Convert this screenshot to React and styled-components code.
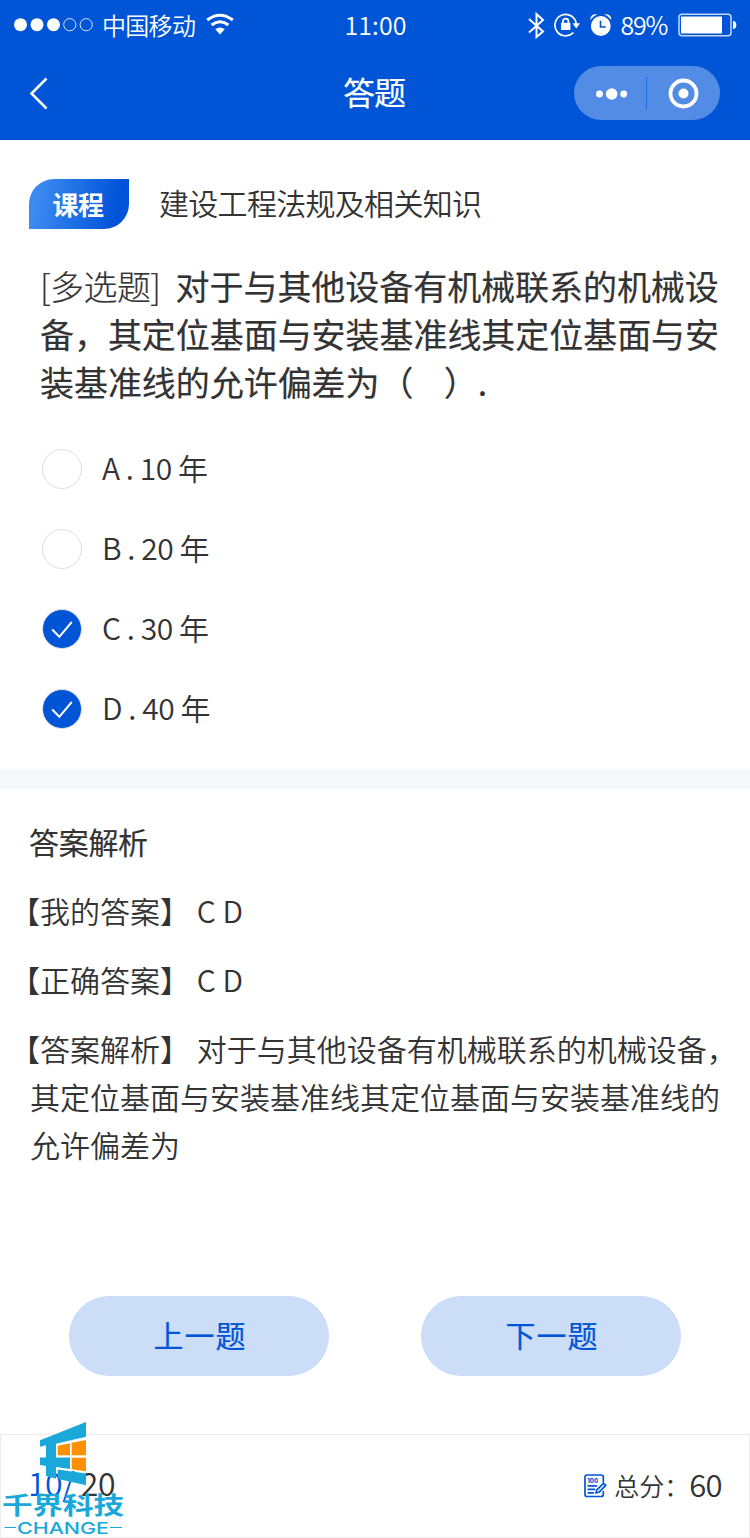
import styled, { createGlobalStyle, css } from 'styled-components';

const GlobalStyle = createGlobalStyle`
  * {
    box-sizing: border-box;
  }

  body {
    margin: 0;
    background: #fff;
    color: #333;
    font-family: 'Noto Sans CJK SC', sans-serif;
    text-spacing-trim: space-all;
  }
`;

// Sits between the regular and the medium cut
const semiMedium = css`
  font-weight: 400;
  -webkit-text-stroke: 0.2px currentColor;
`;

const Page = styled.main`
  display: flex;
  flex-direction: column;
  width: 750px;
  height: 1538px;
  overflow: hidden;
`;

const Header = styled.header`
  height: 140px;
  background: #0055d7;
  color: #fff;
`;

const StatusBar = styled.div`
  display: grid;
  grid-template-columns: 1fr auto 1fr;
  align-items: center;
  height: 50px;
  padding: 0 13px 0 14px;
  font-size: 25px;
  font-weight: 350;
  line-height: 46px;
`;

const StatusGroup = styled.div`
  display: flex;
  align-items: center;
  justify-content: ${props => (props.$end ? 'flex-end' : 'flex-start')};
  height: 50px;
`;

const Carrier = styled.span`
  margin: 0 11px 1px 8px;
  font-size: 24px;
  letter-spacing: -0.7px;
`;

const Time = styled.span`
  margin-bottom: 3px;
  letter-spacing: 0.1px;
`;

const Percent = styled.span`
  margin: 0 11px 3px 9px;
  letter-spacing: -1.3px;
`;

const Icon = styled.svg`
  display: block;
  flex: none;
  margin-left: ${props => props.$left || 0}px;
  margin-right: ${props => props.$right || 0}px;
`;

const NavBar = styled.div`
  display: grid;
  grid-template-columns: 1fr auto 1fr;
  align-items: center;
  height: 86px;
  padding: 0 30px 0 29px;
`;

const NavTitle = styled.h1`
  ${semiMedium}
  margin: 0 1px 4px 0;
  font-size: 32px;
  line-height: 48px;
  letter-spacing: -1px;
`;

const Capsule = styled.div`
  display: flex;
  align-items: center;
  justify-self: end;
  width: 146px;
  height: 54px;
  border-radius: 27px;
  background: #538ce4;
`;

const Section = styled.section`
  padding: ${props => props.$padding};
`;

const Course = styled.div`
  display: flex;
  align-items: center;
  gap: 30px;
  height: 50px;
`;

const Badge = styled.span`
  width: 100px;
  height: 50px;
  padding-right: 2px;
  border-radius: 25px 0 25px 0;
  background: linear-gradient(100deg, #3d8bf2 8%, #0052d7 88%);
  color: #fff;
  font-size: 26px;
  font-weight: 700;
  line-height: 49px;
  letter-spacing: -0.6px;
  text-align: center;
`;

const CourseName = styled.span`
  margin-bottom: 4px;
  font-size: 30px;
  font-weight: 350;
  line-height: 48px;
  letter-spacing: -0.7px;
`;

const Question = styled.h2`
  ${semiMedium}
  margin: 33px 0 23px 11px;
  font-size: 34px;
  line-height: 48px;
  letter-spacing: -0.05px;
  white-space: pre;
`;

const QuestionType = styled.span`
  font-weight: 300;
  letter-spacing: -0.6px;
`;

const OptionList = styled.ul`
  margin: 0;
  padding: 0 0 0 13px;
  list-style: none;
`;

const Option = styled.li`
  display: flex;
  align-items: center;
  gap: 20px;
  height: 80px;
  font-size: 30px;
  font-weight: 350;
  letter-spacing: -0.45px;
`;

const OptionLabel = styled.span`
  padding-bottom: 4px;
`;

const Radio = styled.span`
  display: flex;
  align-items: center;
  justify-content: center;
  width: 40px;
  height: 40px;
  border: 1px solid #dedede;
  border-radius: 50%;
  background: ${props => (props.$checked ? '#0055d7' : '#fff')};
`;

const Divider = styled.div`
  height: 20px;
  background: #f5f9fc;
`;

const AnalysisTitle = styled.h3`
  ${semiMedium}
  margin: 0 0 21px -1px;
  font-size: 30px;
  line-height: 48px;
  letter-spacing: -0.3px;
`;

const Analysis = styled.p`
  margin: 0 0 21px;
  font-size: 30px;
  font-weight: 350;
  line-height: 48px;
  text-indent: -20px;
  white-space: pre;
`;

const Actions = styled.div`
  display: flex;
  justify-content: space-between;
  margin-top: 107px;
  padding: 0 69px;
`;

const Button = styled.button`
  ${semiMedium}
  width: 260px;
  height: 80px;
  padding: 0 0 4px 2px;
  border: none;
  border-radius: 40px;
  background: #ccddf7;
  color: #0055d7;
  font-family: inherit;
  font-size: 30px;
  letter-spacing: 1px;
`;

const Footer = styled.footer`
  position: relative;
  display: flex;
  align-items: center;
  justify-content: space-between;
  height: 104px;
  margin-top: auto;
  padding: 0 27px;
  border: 1px solid #ededed;
`;

const Progress = styled.div`
  margin-bottom: 9px;
  font-size: 32px;
  font-weight: 350;
  line-height: 48px;
  letter-spacing: -0.5px;
`;

const Current = styled.span`
  color: #0055d7;
`;

const Score = styled.div`
  display: flex;
  align-items: center;
  font-size: 25px;
  font-weight: 350;
  line-height: 44px;
`;

const ScoreLabel = styled.span`
  margin-bottom: 2px;
`;

const ScoreValue = styled.span`
  margin-bottom: 4px;
  font-size: 31px;
  letter-spacing: -0.6px;
`;

// Brand mark floats over the footer's left corner
const Watermark = styled.svg`
  position: absolute;
  left: -1px;
  bottom: -1px;
`;

const options = [
  { label: 'A . 10 年', checked: false },
  { label: 'B . 20 年', checked: false },
  { label: 'C . 30 年', checked: true },
  { label: 'D . 40 年', checked: true },
];

function SignalIcon() {
  return (
    <Icon width="80" height="16" viewBox="0 0 80 16">
      <g fill="#fff">
        <circle cx="6.5" cy="7.7" r="6.5" />
        <circle cx="23" cy="7.7" r="6.5" />
        <circle cx="39.5" cy="7.7" r="6.5" />
      </g>
      <g fill="none" stroke="#fff" strokeWidth="1" opacity=".85">
        <circle cx="55.8" cy="7.7" r="6.1" />
        <circle cx="72.2" cy="7.7" r="6.1" />
      </g>
    </Icon>
  );
}

function WifiIcon() {
  return (
    <Icon width="28" height="24" viewBox="0 0 28 24">
      <g fill="none" stroke="#fff" strokeWidth="3">
        <path d="M1.2 7Q14-2.6 26.8 7" />
        <path d="M5.6 12Q14 5.4 22.4 12" />
      </g>
      <path d="M9.3 16.2Q14 12.6 18.7 16.2L14 21.6Z" fill="#fff" />
    </Icon>
  );
}

function BluetoothIcon() {
  return (
    <Icon width="17" height="27" viewBox="0 0 17 27">
      <path
        d="M1 7L15 19.5L8.5 25V2L15 8L1 20.5"
        fill="none"
        stroke="#fff"
        strokeWidth="2"
      />
    </Icon>
  );
}

function RotationLockIcon() {
  return (
    <Icon width="26" height="24" viewBox="0 0 26 24" $left={9}>
      <path
        d="M19.4 19.5A10.7 10.7 0 1 1 22.3 11"
        fill="none"
        stroke="#fff"
        strokeWidth="1.7"
      />
      <path d="M18.6 10.2H26L22.3 15.6Z" fill="#fff" />
      <rect x="7" y="9.8" width="9.4" height="7.2" fill="#fff" />
      <path
        d="M9 10.5V8.2Q9 5.7 11.7 5.7T14.4 8.2V10.5"
        fill="none"
        stroke="#fff"
        strokeWidth="1.7"
      />
    </Icon>
  );
}

function AlarmIcon() {
  return (
    <Icon width="22" height="24" viewBox="0 0 22 24" $left={10}>
      <circle cx="10.8" cy="13" r="9.9" fill="#fff" />
      <path
        d="M.2 7Q.5.2 7.5 1.3Q3 2.8.2 7ZM21.4 7Q21.1.2 14.1 1.3Q18.6 2.8 21.4 7Z"
        fill="#fff"
      />
      <path d="M10.5 7.8V14H15.8" fill="none" stroke="#0055d7" strokeWidth="1.6" />
    </Icon>
  );
}

function BatteryIcon() {
  return (
    <Icon width="59" height="24" viewBox="0 0 59 24">
      <rect
        x="1"
        y="1.2"
        width="52"
        height="21.6"
        rx="3"
        fill="none"
        stroke="#c5d8f6"
        strokeWidth="1.5"
      />
      <rect x="3" y="3.5" width="41" height="17" fill="#fff" />
      <path d="M55 8Q58.3 8 58.3 12T55 16Z" fill="#fff" />
    </Icon>
  );
}

function PaperIcon() {
  return (
    <Icon width="23" height="24" viewBox="0 0 23 24" $right={7}>
      <g
        fill="none"
        stroke="#0055d7"
        strokeWidth="1.7"
        strokeLinecap="round"
        strokeLinejoin="round"
      >
        <path d="M19.3 8V3Q19.3 1 17.3 1H3Q1 1 1 3V20.5Q1 22.5 3 22.5H17.3Q19.3 22.5 19.3 20.5V17.5" />
        <path d="M4.2 11.8H12.5M4.2 15.3H10.5M4.2 18.8H9.5" />
        <path d="M12 19L12.6 16.2L19.6 9.3L21.8 11.3L14.8 18.3L12 19Z" />
      </g>
      <text
        x="3.2"
        y="9"
        fill="#0055d7"
        fontFamily="Inter, sans-serif"
        fontSize="6.2"
        fontWeight="800"
        textLength="10.8"
        lengthAdjust="spacingAndGlyphs"
      >
        100
      </text>
    </Icon>
  );
}

function Logo() {
  return (
    <Watermark width="126" height="118" viewBox="0 0 126 118">
      <path
        d="M40 20.3L86 2V16.8L56 23.8V37.5H70V48.9L56 47V58.8L46 56V46L40 45V37.5H46V25.3L40 26.7Z"
        fill="#1aa8da"
      />
      <path d="M57.7 49.5L86 53.5V65.3L56 58.5H57.7Z" fill="#1aa8da" />
      <path
        d="M57.7 25.7L70 23.2V35.3H57.7ZM71.7 22.8L86 20V35.3H71.7ZM71.7 37.7H86V51.2L71.7 49.2Z"
        fill="#ff9000"
      />
      <g fill="#1aa8da">
        <text
          x="2"
          y="93.7"
          fontFamily="Noto Sans CJK SC, sans-serif"
          fontSize="24"
          fontWeight="700"
          textLength="122"
          lengthAdjust="spacingAndGlyphs"
        >
          千界科技
        </text>
        <text
          x="17"
          y="113.5"
          fontFamily="Inter, sans-serif"
          fontSize="16.5"
          fontWeight="500"
          textLength="92"
          lengthAdjust="spacingAndGlyphs"
        >
          CHANGE
        </text>
        <path d="M4.5 107H16V108H4.5ZM110 107H122V108H110Z" />
      </g>
    </Watermark>
  );
}

function App() {
  return (
    <Page>
      <GlobalStyle />
      <Header>
        <StatusBar>
          <StatusGroup>
            <SignalIcon />
            <Carrier>中国移动</Carrier>
            <WifiIcon />
          </StatusGroup>
          <Time>11:00</Time>
          <StatusGroup $end>
            <BluetoothIcon />
            <RotationLockIcon />
            <AlarmIcon />
            <Percent>89%</Percent>
            <BatteryIcon />
          </StatusGroup>
        </StatusBar>
        <NavBar>
          <Icon width="20" height="34" viewBox="0 0 20 34">
            <path
              d="M17.5 2.5L2.5 17.5L17.5 32.5"
              fill="none"
              stroke="#fff"
              strokeWidth="2.5"
            />
          </Icon>
          <NavTitle>答题</NavTitle>
          <Capsule>
            <Icon width="146" height="54" viewBox="0 0 146 54">
              <g fill="#fff">
                <circle cx="25.5" cy="28" r="3.4" />
                <circle cx="37.7" cy="28" r="5.8" />
                <circle cx="49.7" cy="28" r="3.4" />
                <circle cx="109.5" cy="27.5" r="5" />
              </g>
              <path d="M72.5 11V43" stroke="#1a6cdb" />
              <circle
                cx="109.5"
                cy="27.5"
                r="13"
                fill="none"
                stroke="#fff"
                strokeWidth="3.8"
              />
            </Icon>
          </Capsule>
        </NavBar>
      </Header>

      <Section $padding="39px 29px 20px">
        <Course>
          <Badge>课程</Badge>
          <CourseName>建设工程法规及相关知识</CourseName>
        </Course>
        <Question>
          <QuestionType>[多选题]</QuestionType>
          {'  对于与其他设备有机械联系的机械设\n'}
          {'备，其定位基面与安装基准线其定位基面与安\n'}
          {'装基准线的允许偏差为（    ）.'}
        </Question>
        <OptionList>
          {options.map(option => (
            <Option key={option.label}>
              <Radio $checked={option.checked}>
                {option.checked && (
                  <svg width="22" height="18" viewBox="0 0 22 18">
                    <path
                      d="M1.2 9.5L8.3 16.8L20.8 2"
                      fill="none"
                      stroke="#fff"
                      strokeWidth="2"
                    />
                  </svg>
                )}
              </Radio>
              <OptionLabel>{option.label}</OptionLabel>
            </Option>
          ))}
        </OptionList>
      </Section>

      <Divider />

      <Section $padding="28px 30px 0">
        <AnalysisTitle>答案解析</AnalysisTitle>
        <Analysis>【我的答案】 C D</Analysis>
        <Analysis>【正确答案】 C D</Analysis>
        <Analysis>
          {'【答案解析】 对于与其他设备有机械联系的机械设备，\n'}
          {'其定位基面与安装基准线其定位基面与安装基准线的\n'}
          {'允许偏差为'}
        </Analysis>
      </Section>

      <Actions>
        <Button>上一题</Button>
        <Button>下一题</Button>
      </Actions>

      <Footer>
        <Progress>
          <Current>10/</Current> 20
        </Progress>
        <Score>
          <PaperIcon />
          <ScoreLabel>总分：</ScoreLabel>
          <ScoreValue>60</ScoreValue>
        </Score>
        <Logo />
      </Footer>
    </Page>
  );
}

export default App;
